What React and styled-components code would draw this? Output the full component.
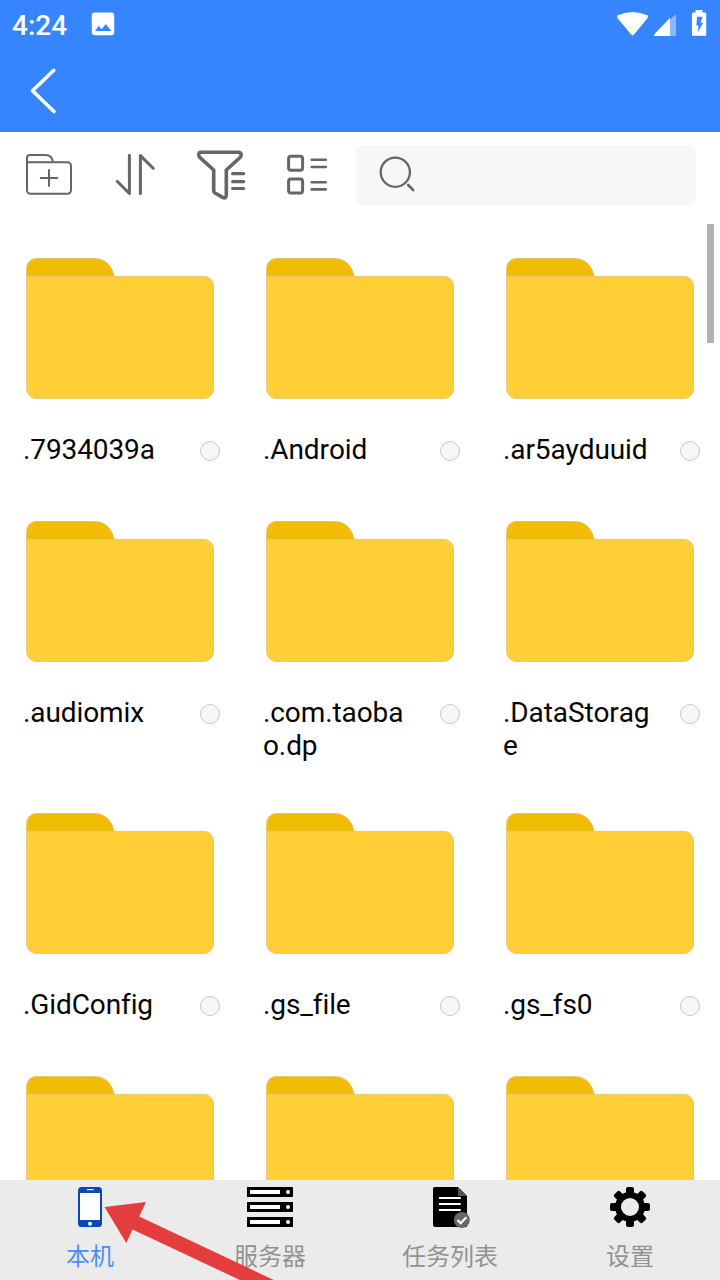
import { useState } from "react";
import styled, { createGlobalStyle } from "styled-components";

const GlobalStyle = createGlobalStyle`
  * {
    box-sizing: border-box;
  }

  body {
    margin: 0;
    background: #ffffff;
    font-family: Roboto, "Noto Sans CJK SC", sans-serif;
  }
`;

const Screen = styled.div`
  display: flex;
  flex-direction: column;
  position: relative;
  width: 720px;
  height: 1280px;
  overflow: hidden;
`;

const Header = styled.header`
  flex: none;
  height: 132px;
  background: #3784ff;
`;

const StatusBar = styled.div`
  display: flex;
  align-items: center;
  height: 48px;
  padding: 0 12px;
  color: #ffffff;
`;

const Clock = styled.span`
  width: 78px;
  padding-top: 3px;
  font-size: 28px;
  font-weight: 500;
  line-height: 33px;
`;

const StatusIcons = styled.div`
  display: flex;
  margin-left: auto;
  margin-right: -12px;
`;

const BackButton = styled.button`
  display: flex;
  padding: 0;
  margin: 12px 0 0 22px;
  border: none;
  background: none;
  cursor: pointer;
`;

const Toolbar = styled.div`
  flex: none;
  display: flex;
  justify-content: space-between;
  height: 92px;
  padding: 13px 24px 0 20px;
`;

const Tools = styled.div`
  display: flex;
  gap: 25px;
`;

const ToolButton = styled.button`
  flex: none;
  display: flex;
  width: 60px;
  height: 60px;
  padding: 0;
  border: none;
  background: none;
  cursor: pointer;
`;

const SearchBox = styled.div`
  flex: none;
  width: 340px;
  height: 60px;
  border-radius: 6px;
  background: #f7f7f7;
`;

const FileArea = styled.main`
  flex: 1;
  position: relative;
  min-height: 0;
  overflow: hidden;
`;

const FileGrid = styled.div`
  display: grid;
  grid-template-columns: repeat(3, 240px);
  align-items: start;
  padding-top: 33px;
`;

const FileCell = styled.div`
  padding: 0 20px 50px 23px;
`;

const FileInfo = styled.div`
  display: flex;
  justify-content: space-between;
  min-height: 37px;
  margin-top: 33px;
`;

const FileName = styled.span`
  width: 148px;
  color: #050505;
  font-size: 28px;
  font-kerning: none;
  letter-spacing: -0.1px;
  line-height: 33px;
  word-break: break-all;
`;

const Radio = styled.button`
  flex: none;
  width: 20px;
  height: 20px;
  margin-top: 8px;
  padding: 0;
  border: 1px solid #c8c8c8;
  border-radius: 50%;
  background: ${(props) => (props.$checked ? "#3784ff" : "#f6f6f6")};
`;

const ScrollThumb = styled.div`
  position: absolute;
  top: 0;
  right: 6px;
  width: 7px;
  height: 119px;
  background: #b1b1b1;
`;

const TabBar = styled.nav`
  flex: none;
  display: grid;
  grid-template-columns: repeat(4, 1fr);
  height: 100px;
  background: #ebebeb;
`;

const Tab = styled.button`
  display: flex;
  flex-direction: column;
  align-items: center;
  padding: 7px 0 0;
  border: none;
  background: none;
  font-family: inherit;
  cursor: pointer;
`;

const TabLabel = styled.span`
  margin-top: 10px;
  color: ${(props) => (props.$active ? "#4a8ef5" : "#929292")};
  font-size: 24px;
  font-weight: 400;
  line-height: 36px;
`;

// pointer drawn over the tab bar
const Arrow = styled.svg`
  position: absolute;
  left: 100px;
  bottom: 0;
  pointer-events: none;
`;

const PictureIcon = () => (
  <svg width="26" height="48" viewBox="0 0 26 48">
    <path
      fill="#fff"
      fillRule="evenodd"
      d="M4.500 12.500h17a2.700 2.700 0 0 1 2.700 2.700v17.300a2.700 2.700 0 0 1-2.700 2.700h-17a2.700 2.700 0 0 1-2.700-2.700V15.200a2.700 2.700 0 0 1 2.700-2.700zM5 31h16.300L15.800 24l-4.200 5.200-2.900-3.400z"
    />
  </svg>
);

const SignalIcons = () => (
  <svg width="110" height="48" viewBox="0 0 110 48">
    <path fill="#fff" d="M7.200 15.600Q22.500 8.200 38 15.600L37.600 18 24 34.600q-1.400 1.600-2.800 0L7.400 18z" />
    <path fill="#8bb7ff" d="M66 14v22H60V19.500z" />
    <path fill="#fff" d="M60 18v18H44v-1.600z" />
    <path
      fill="#fff"
      fillRule="evenodd"
      d="M85.500 10h7v2.500H95a1.200 1.200 0 0 1 1.200 1.200v22.100H82V13.700a1.200 1.200 0 0 1 1.200-1.200h2.300zM87 16.800l-.6 8.800h2.200l-.9 6.800 5.400-9.600h-2.500l2-6z"
    />
  </svg>
);

const BackIcon = () => (
  <svg width="42" height="60" viewBox="0 0 42 60">
    <path
      d="M31.800 10.300 10.500 30.700l21.500 20.800"
      fill="none"
      stroke="#fff"
      strokeWidth="3.600"
      strokeLinecap="round"
      strokeLinejoin="round"
    />
  </svg>
);

const ToolIcon = ({ width = 2.6, children }) => (
  <svg
    width="60"
    height="60"
    viewBox="0 0 60 60"
    fill="none"
    stroke="#666"
    strokeWidth={width}
    strokeLinecap="round"
    strokeLinejoin="round"
  >
    {children}
  </svg>
);

const NewFolderIcon = () => (
  <ToolIcon width={2}>
    <path d="M7 17.200h40.500a3.500 3.500 0 0 1 3.500 3.500v24.600a3.500 3.500 0 0 1-3.500 3.500h-37A3.500 3.500 0 0 1 7 45.300V13a3 3 0 0 1 3-3h15.500q6.500 0 7.500 7" />
    <path d="M29 25v16M20.800 33h16.600" />
  </ToolIcon>
);

const SortIcon = () => (
  <ToolIcon width={3}>
    <path d="M24.400 10.300v38.200L12.200 36.300M35.400 48.500V10.600l12.800 12.600" />
  </ToolIcon>
);

const FilterIcon = () => (
  <ToolIcon width={3.6}>
    <path d="M11 7.200h37q3.200 0 3.200 2.800 0 1.400-1.400 2.700L36.300 25v25q0 3.700-3.200 2.600L25 48q-1.300-.8-1.300-2.300V25L10 12.700q-1.300-1.200-1.300-2.700 0-2.800 2.300-2.800z" />
    <path d="M42.600 28.700h11M42.600 36.600h11M42.600 43.500h11" strokeWidth="3.200" />
  </ToolIcon>
);

const LayoutIcon = () => (
  <ToolIcon>
    <g strokeWidth="3">
      <rect x="13.600" y="11.200" width="14" height="14" rx="2.400" />
      <rect x="13.600" y="33.900" width="14" height="14" rx="2.400" />
    </g>
    <path d="M36.700 14.800h14.100M36.700 22h14.100M36.700 37.200h14.100M36.700 44.400h14.100" />
  </ToolIcon>
);

const SearchIcon = () => (
  <ToolIcon width={2.3}>
    <circle cx="39.300" cy="27.200" r="14.600" />
    <path d="m52.200 40 5 5.200" strokeWidth="2.600" />
  </ToolIcon>
);

const FolderIcon = () => (
  <svg width="192" height="143" viewBox="-1 0 192 143" style={{ display: "block" }}>
    <path
      d="M2.700 21V11.500a9.500 9.500 0 0 1 9.500-9.500h58.300Q86 2 90.400 20z"
      fill="#f1bd04"
      stroke="#e6c460"
      transform="translate(0 -0.500)"
    />
    <rect x="2.700" y="19.400" width="186.800" height="122" rx="9.500" fill="#ffcf35" stroke="#e3c67c" />
    <path d="M3 29.600V19.400h12z" fill="#ffcf35" />
    <path d="M2.700 29.600V19.400H15" fill="none" stroke="#e3c67c" />
  </svg>
);

const PhoneIcon = () => (
  <svg width="60" height="42" viewBox="0 0 60 42">
    <rect x="18" y="0" width="24" height="40" rx="3.500" fill="#0b49ae" />
    <rect x="20" y="6" width="20" height="27" fill="#fff" />
    <rect x="27" y="2" width="6.600" height="1.200" fill="#fff" />
    <circle cx="30" cy="36.800" r="2" fill="#fff" />
  </svg>
);

const ServerIcon = () => (
  <svg width="60" height="42" viewBox="0 0 60 42">
    {[0, 15, 30].map((y) => (
      <g key={y}>
        <rect x="7" y={y} width="46" height="10" fill="#000" />
        <rect x="10" y={y + 3} width="30" height="4" fill="#fff" />
        <circle cx="48" cy={y + 5} r="2" fill="#fff" />
      </g>
    ))}
  </svg>
);

const TaskIcon = () => (
  <svg width="60" height="42" viewBox="0 0 60 42">
    <path d="M15 0h23l9 9v31H15.500q-2.500 0-2.500-2.500V2q0-2 2-2z" fill="#000" />
    <path d="M38 0v9h9z" fill="#555" />
    <path d="M19 11h21.800M19 17h21.800M19 23h21.800" stroke="#fff" strokeWidth="2" />
    <circle cx="41.800" cy="33" r="8" fill="#686868" />
    <path d="m37.500 33 3.200 3.200 5.700-5.900" fill="none" stroke="#fff" strokeWidth="2.200" />
  </svg>
);

const GearIcon = () => (
  <svg width="60" height="42" viewBox="0 0 60 42">
    <circle cx="30" cy="20" r="12" fill="none" stroke="#000" strokeWidth="6" />
    {[0, 45, 90, 135, 180, 225, 270, 315].map((angle) => (
      <rect
        key={angle}
        x="26"
        y="0"
        width="8"
        height="9"
        rx="2"
        transform={`rotate(${angle} 30 20)`}
      />
    ))}
  </svg>
);

const files = [
  ".7934039a",
  ".Android",
  ".ar5ayduuid",
  ".audiomix",
  ".com.taobao.dp",
  ".DataStorage",
  ".GidConfig",
  ".gs_file",
  ".gs_fs0",
  "",
  "",
  "",
];

const tabs = [
  { id: "local", label: "本机", icon: <PhoneIcon /> },
  { id: "server", label: "服务器", icon: <ServerIcon /> },
  { id: "tasks", label: "任务列表", icon: <TaskIcon /> },
  { id: "settings", label: "设置", icon: <GearIcon /> },
];

const File = ({ name }) => {
  const [checked, setChecked] = useState(false);

  return (
    <FileCell>
      <FolderIcon />
      <FileInfo>
        <FileName>{name}</FileName>
        <Radio $checked={checked} onClick={() => setChecked(!checked)} />
      </FileInfo>
    </FileCell>
  );
};

const App = () => {
  const [active, setActive] = useState("local");

  return (
    <Screen>
      <GlobalStyle />
      <Header>
        <StatusBar>
          <Clock>4:24</Clock>
          <PictureIcon />
          <StatusIcons>
            <SignalIcons />
          </StatusIcons>
        </StatusBar>
        <BackButton>
          <BackIcon />
        </BackButton>
      </Header>
      <Toolbar>
        <Tools>
          <ToolButton>
            <NewFolderIcon />
          </ToolButton>
          <ToolButton>
            <SortIcon />
          </ToolButton>
          <ToolButton>
            <FilterIcon />
          </ToolButton>
          <ToolButton>
            <LayoutIcon />
          </ToolButton>
        </Tools>
        <SearchBox>
          <SearchIcon />
        </SearchBox>
      </Toolbar>
      <FileArea>
        <FileGrid>
          {files.map((name, index) => (
            <File key={index} name={name} />
          ))}
        </FileGrid>
        <ScrollThumb />
      </FileArea>
      <TabBar>
        {tabs.map((tab) => (
          <Tab key={tab.id} onClick={() => setActive(tab.id)}>
            {tab.icon}
            <TabLabel $active={tab.id === active}>{tab.label}</TabLabel>
          </Tab>
        ))}
      </TabBar>
      <Arrow width="180" height="80" viewBox="0 0 180 80">
        <path d="M4.500 7 46 2 39.200 16.500 176 81H142L32.500 29.500 26.300 43z" fill="#e53d3d" />
      </Arrow>
    </Screen>
  );
};

export default App;
